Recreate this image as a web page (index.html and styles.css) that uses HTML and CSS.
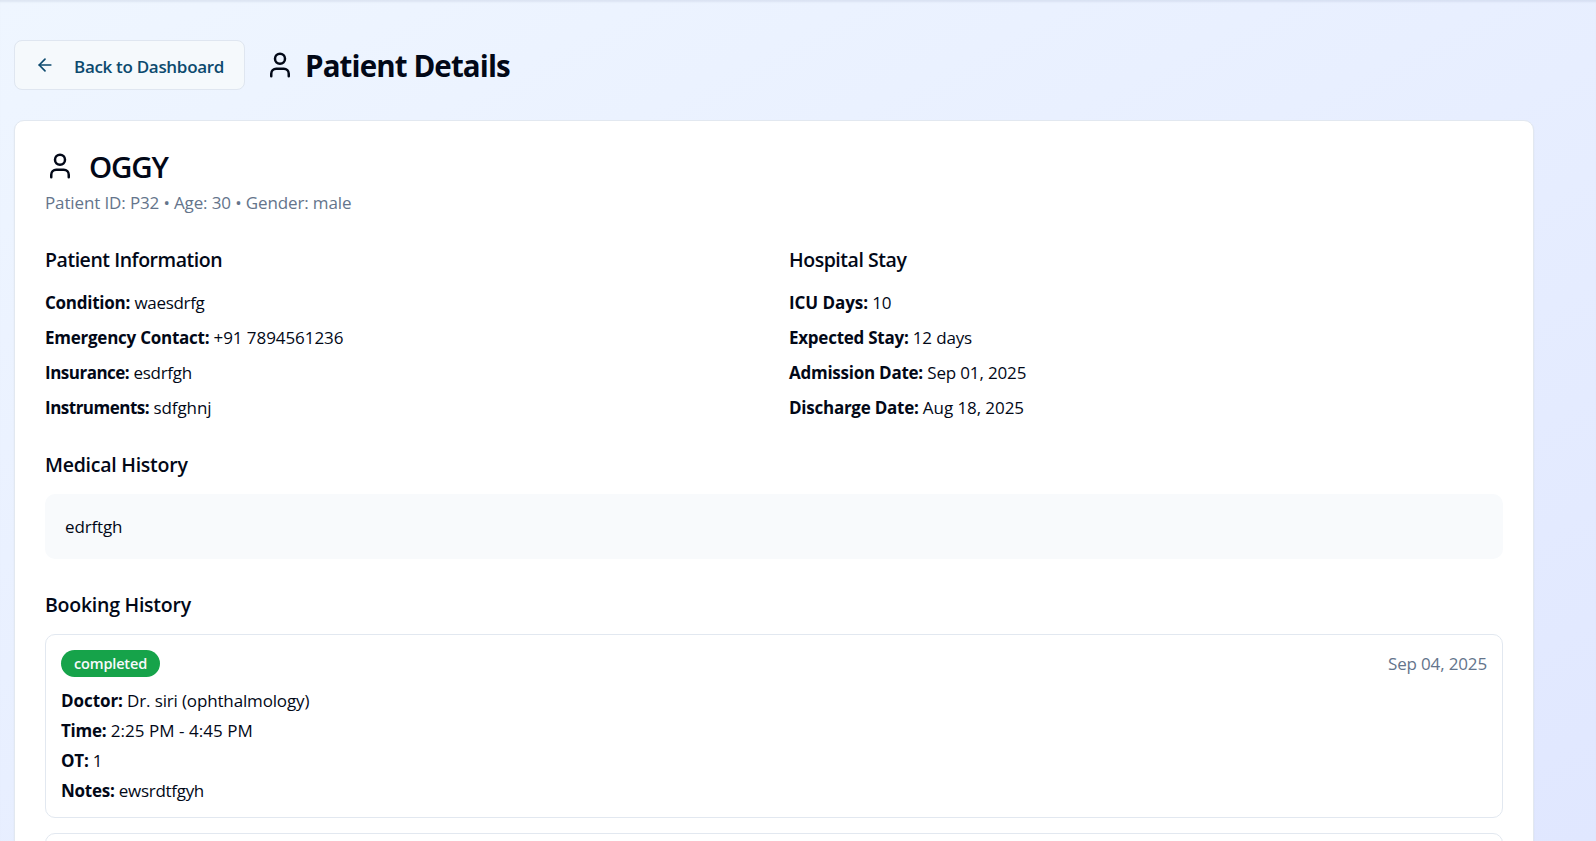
FILE: index.html
```
<!DOCTYPE html>
<html lang="en">
<head>
<meta charset="utf-8">
<title>Patient Details</title>
<link rel="stylesheet" href="styles.css">
</head>
<body>
<main class="page">
  <header class="page-header">
    <button class="back" type="button">
      <svg class="icon-arrow" viewBox="0 0 24 24"><path d="m12 19-7-7 7-7"/><path d="M19 12H5"/></svg>
      <span>Back to Dashboard</span>
    </button>
    <h1 class="page-title">
      <svg class="icon-user" viewBox="0 0 24 24"><path d="M19 21v-2a4 4 0 0 0-4-4H9a4 4 0 0 0-4 4v2"/><circle cx="12" cy="7" r="4"/></svg>
      <span>Patient Details</span>
    </h1>
  </header>
  <section class="card">
    <h2 class="patient-name">
      <svg class="icon-user" viewBox="0 0 24 24"><path d="M19 21v-2a4 4 0 0 0-4-4H9a4 4 0 0 0-4 4v2"/><circle cx="12" cy="7" r="4"/></svg>
      <span>OGGY</span>
    </h2>
    <p class="summary">Patient ID: P32 • Age: 30 • Gender: male</p>
    <div class="columns">
      <div>
        <h3 class="heading heading-tight">Patient Information</h3>
        <div class="fields">
          <p><strong>Condition:</strong> <span class="snug">waesdrfg</span></p>
          <p><strong>Emergency Contact:</strong> <span class="wide">+91 7894561236</span></p>
          <p><strong class="tight">Insurance:</strong> <span class="snug">esdrfgh</span></p>
          <p><strong class="tight">Instruments:</strong> <span class="wide">sdfghnj</span></p>
        </div>
      </div>
      <div>
        <h3 class="heading heading-tight">Hospital Stay</h3>
        <div class="fields">
          <p><strong class="wide">ICU Days:</strong> 10</p>
          <p><strong>Expected Stay:</strong> 12 days</p>
          <p><strong>Admission Date:</strong> Sep 01, 2025</p>
          <p><strong>Discharge Date:</strong> <span class="wide">Aug 18, 2025</span></p>
        </div>
      </div>
    </div>
    <h3 class="heading">Medical History</h3>
    <div class="history">edrftgh</div>
    <h3 class="heading">Booking History</h3>
    <div class="bookings">
      <article class="booking">
        <div class="booking-top">
          <span class="badge">completed</span>
          <time class="date">Sep 04, 2025</time>
        </div>
        <div class="booking-lines">
          <p><strong class="wide">Doctor:</strong> Dr. siri (ophthalmology)</p>
          <p><strong>Time:</strong> <span class="loose">2:25 PM - 4:45 PM</span></p>
          <p><strong>OT:</strong> 1</p>
          <p><strong>Notes:</strong> <span class="snug">ewsrdtfgyh</span></p>
        </div>
      </article>
      <article class="booking"></article>
    </div>
  </section>
</main>
</body>
</html>
```
FILE: styles.css
```
* { box-sizing: border-box; }
html, body { height: 100%; }
body {
  margin: 0;
  overflow: hidden;
  font-family: "Open Sans", "Noto Sans", sans-serif;
  font-size: 17px;
  line-height: 25px;
  letter-spacing: -0.15px;
  color: #020817;
}
h1, h2, h3, p { margin: 0; }
.page {
  height: 841px;
  overflow: hidden;
  padding: 40px 62px 0 14px;
  background: linear-gradient(to bottom right, #eff6ff, #e0e7ff);
  box-shadow: inset 0 3px 2px -1px rgba(30, 50, 90, 0.08);
}
svg { fill: none; stroke: currentColor; stroke-width: 2; stroke-linecap: round; stroke-linejoin: round; flex: none; }
.page-header { display: flex; align-items: center; gap: 20px; }
.back {
  display: flex;
  align-items: center;
  gap: 19px;
  width: 231px;
  height: 50px;
  padding: 0 20px;
  border: 1px solid #dfe6f0;
  border-radius: 8px;
  background: #f5f9fc;
  color: #0c4a6e;
  font: inherit;
  font-weight: 600;
  letter-spacing: -0.31px;
  white-space: nowrap;
}
.back span { padding-top: 3px; }
.icon-arrow { width: 20px; height: 20px; }
.icon-user { width: 30px; height: 30px; }
.page-title {
  display: flex;
  align-items: center;
  gap: 10px;
  font-size: 29.5px;
  line-height: 40px;
  font-weight: 700;
  letter-spacing: -0.88px;
}
.page-title span { padding-top: 2px; }
.card {
  margin-top: 30px;
  height: 900px;
  padding: 25px 30px;
  border: 1px solid #e2e8f0;
  border-radius: 10px;
  background: #fff;
  box-shadow: 0 1px 2px rgba(0, 0, 0, 0.05);
}
.patient-name {
  display: flex;
  align-items: center;
  gap: 14px;
  height: 40px;
  font-size: 29.5px;
  line-height: 40px;
  font-weight: 600;
  letter-spacing: -1.2px;
}
.patient-name span { padding-top: 2px; }
.summary { margin: 4px 0 30px; color: #64748b; letter-spacing: -0.13px; }
.heading { margin-bottom: 14px; font-size: 19.5px; line-height: 30px; font-weight: 600; letter-spacing: -0.25px; }
.heading-tight { margin-bottom: 15px; letter-spacing: -0.46px; }
.columns { display: grid; grid-template-columns: 1fr 1fr; gap: 30px; margin-bottom: 30px; }
.fields { display: grid; gap: 10px; }
strong { font-weight: 700; letter-spacing: -0.25px; }
.tight { letter-spacing: -0.5px; }
.snug { letter-spacing: -0.3px; }
.wide { letter-spacing: -0.07px; }
.loose { letter-spacing: 0.05px; }
.history { height: 65px; margin-bottom: 31px; padding: 20px; border-radius: 10px; background: #f8fafc; }
.bookings { display: grid; gap: 15px; }
.booking { height: 184px; padding: 15px; border: 1px solid #e2e8f0; border-radius: 10px; }
.booking-top { display: flex; align-items: flex-start; justify-content: space-between; height: 28px; }
.badge {
  width: 99px;
  height: 27px;
  border-radius: 14px;
  background: #16a34a;
  color: #f8fafc;
  font-size: 14.5px;
  line-height: 27px;
  font-weight: 600;
  text-align: center;
}
.date { padding-top: 1px; color: #64748b; }
.booking-lines { margin-top: 10px; display: grid; gap: 5px; }
```
